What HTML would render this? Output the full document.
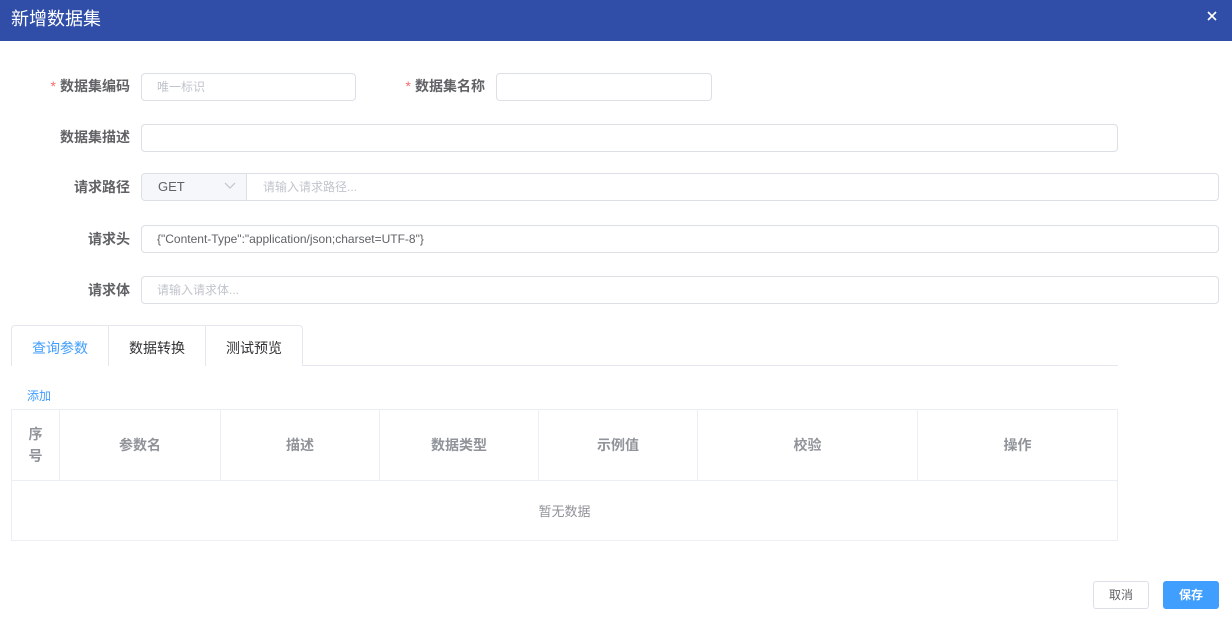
<!DOCTYPE html>
<html><head><meta charset="utf-8"><style>
*{box-sizing:border-box;margin:0;padding:0}
body{width:1232px;height:623px;background:#fff;font-family:"Liberation Sans","Noto Sans CJK SC",sans-serif;font-size:13px;color:#606266;position:relative;overflow:hidden}
.hd{position:absolute;left:0;top:0;width:1232px;height:41px;background:#304ea8;color:#fff;font-size:18px;line-height:38px;padding-left:11px}
.x{position:absolute;right:15px;top:11px;width:10px;height:10px}
.ab{position:absolute}
.lbl{position:absolute;font-weight:bold;color:#606266;font-size:14px;text-align:right;width:90px}
.lbl i{color:#f56c6c;font-style:normal;font-weight:normal;margin-right:4px}
.in{position:absolute;border:1px solid #dcdfe6;border-radius:4px;height:28px;line-height:26px;padding-left:15px;font-size:12px;color:#c0c4cc}
th,td{border:1px solid #ebeef5}
</style></head><body>
<div class="hd">新增数据集<svg class="x" viewBox="0 0 10 10"><path d="M1 1L9 9M9 1L1 9" stroke="#fff" stroke-width="1.6"/></svg></div>

<div class="lbl" style="left:40px;top:76px"><i>*</i>数据集编码</div>
<div class="in" style="left:141px;top:73px;width:215px">唯一标识</div>
<div class="lbl" style="left:395px;top:76px"><i>*</i>数据集名称</div>
<div class="in" style="left:496px;top:73px;width:216px"></div>

<div class="lbl" style="left:40px;top:127px">数据集描述</div>
<div class="in" style="left:141px;top:124px;width:977px"></div>

<div class="lbl" style="left:40px;top:177px">请求路径</div>
<div class="in" style="left:141px;top:173px;width:1078px;padding:0"></div>
<div class="ab" style="left:142px;top:174px;width:105px;height:26px;background:#f5f7fa;border-right:1px solid #dcdfe6;border-radius:4px 0 0 4px;color:#606266;line-height:26px;padding-left:16px">GET
<svg style="position:absolute;left:82px;top:8px" width="12" height="8" viewBox="0 0 12 8"><path d="M1 1L6 6L11 1" fill="none" stroke="#c0c4cc" stroke-width="1.2"/></svg></div>
<div class="ab" style="left:263px;top:174px;line-height:26px;color:#c0c4cc;font-size:12px">请输入请求路径...</div>

<div class="lbl" style="left:40px;top:229px">请求头</div>
<div class="in" style="left:141px;top:225px;width:1078px;color:#606266">{"Content-Type":"application/json;charset=UTF-8"}</div>

<div class="lbl" style="left:40px;top:280px">请求体</div>
<div class="in" style="left:141px;top:276px;width:1078px">请输入请求体...</div>

<div class="ab" style="left:11px;top:365px;width:1107px;height:1px;background:#e4e7ed"></div>
<div class="ab" style="left:11px;top:325px;width:292px;height:41px;border:1px solid #e4e7ed;border-bottom:none;border-radius:4px 4px 0 0;background:#fff"></div>
<div class="ab" style="left:108px;top:326px;width:1px;height:40px;background:#e4e7ed"></div>
<div class="ab" style="left:205px;top:326px;width:1px;height:40px;background:#e4e7ed"></div>
<div class="ab" style="left:12px;top:365px;width:96px;height:1px;background:#fff"></div>
<div class="ab" style="left:32px;top:338px;color:#409eff;font-size:14px">查询参数</div>
<div class="ab" style="left:129px;top:338px;color:#303133;font-size:14px">数据转换</div>
<div class="ab" style="left:226px;top:338px;color:#303133;font-size:14px">测试预览</div>

<div class="ab" style="left:27px;top:387px;color:#409eff;font-size:12px">添加</div>

<table class="ab" style="left:11px;top:409px;width:1107px;border-collapse:collapse;color:#909399;font-weight:bold;font-size:14px;text-align:center">
<tr style="height:71px"><th style="width:48px;line-height:22px">序<br>号</th><th style="width:161px">参数名</th><th style="width:159px">描述</th><th style="width:159px">数据类型</th><th style="width:159px">示例值</th><th style="width:220px">校验</th><th>操作</th></tr>
<tr style="height:60px"><td colspan="7" style="font-weight:normal;font-size:13px">暂无数据</td></tr>
</table>

<div class="ab" style="left:1093px;top:581px;width:56px;height:28px;border:1px solid #dcdfe6;border-radius:3px;text-align:center;line-height:26px;font-size:12px;color:#606266">取消</div>
<div class="ab" style="left:1163px;top:581px;width:56px;height:28px;background:#409eff;border-radius:3px;text-align:center;line-height:28px;font-size:12px;color:#fff;font-weight:bold">保存</div>
</body></html>
